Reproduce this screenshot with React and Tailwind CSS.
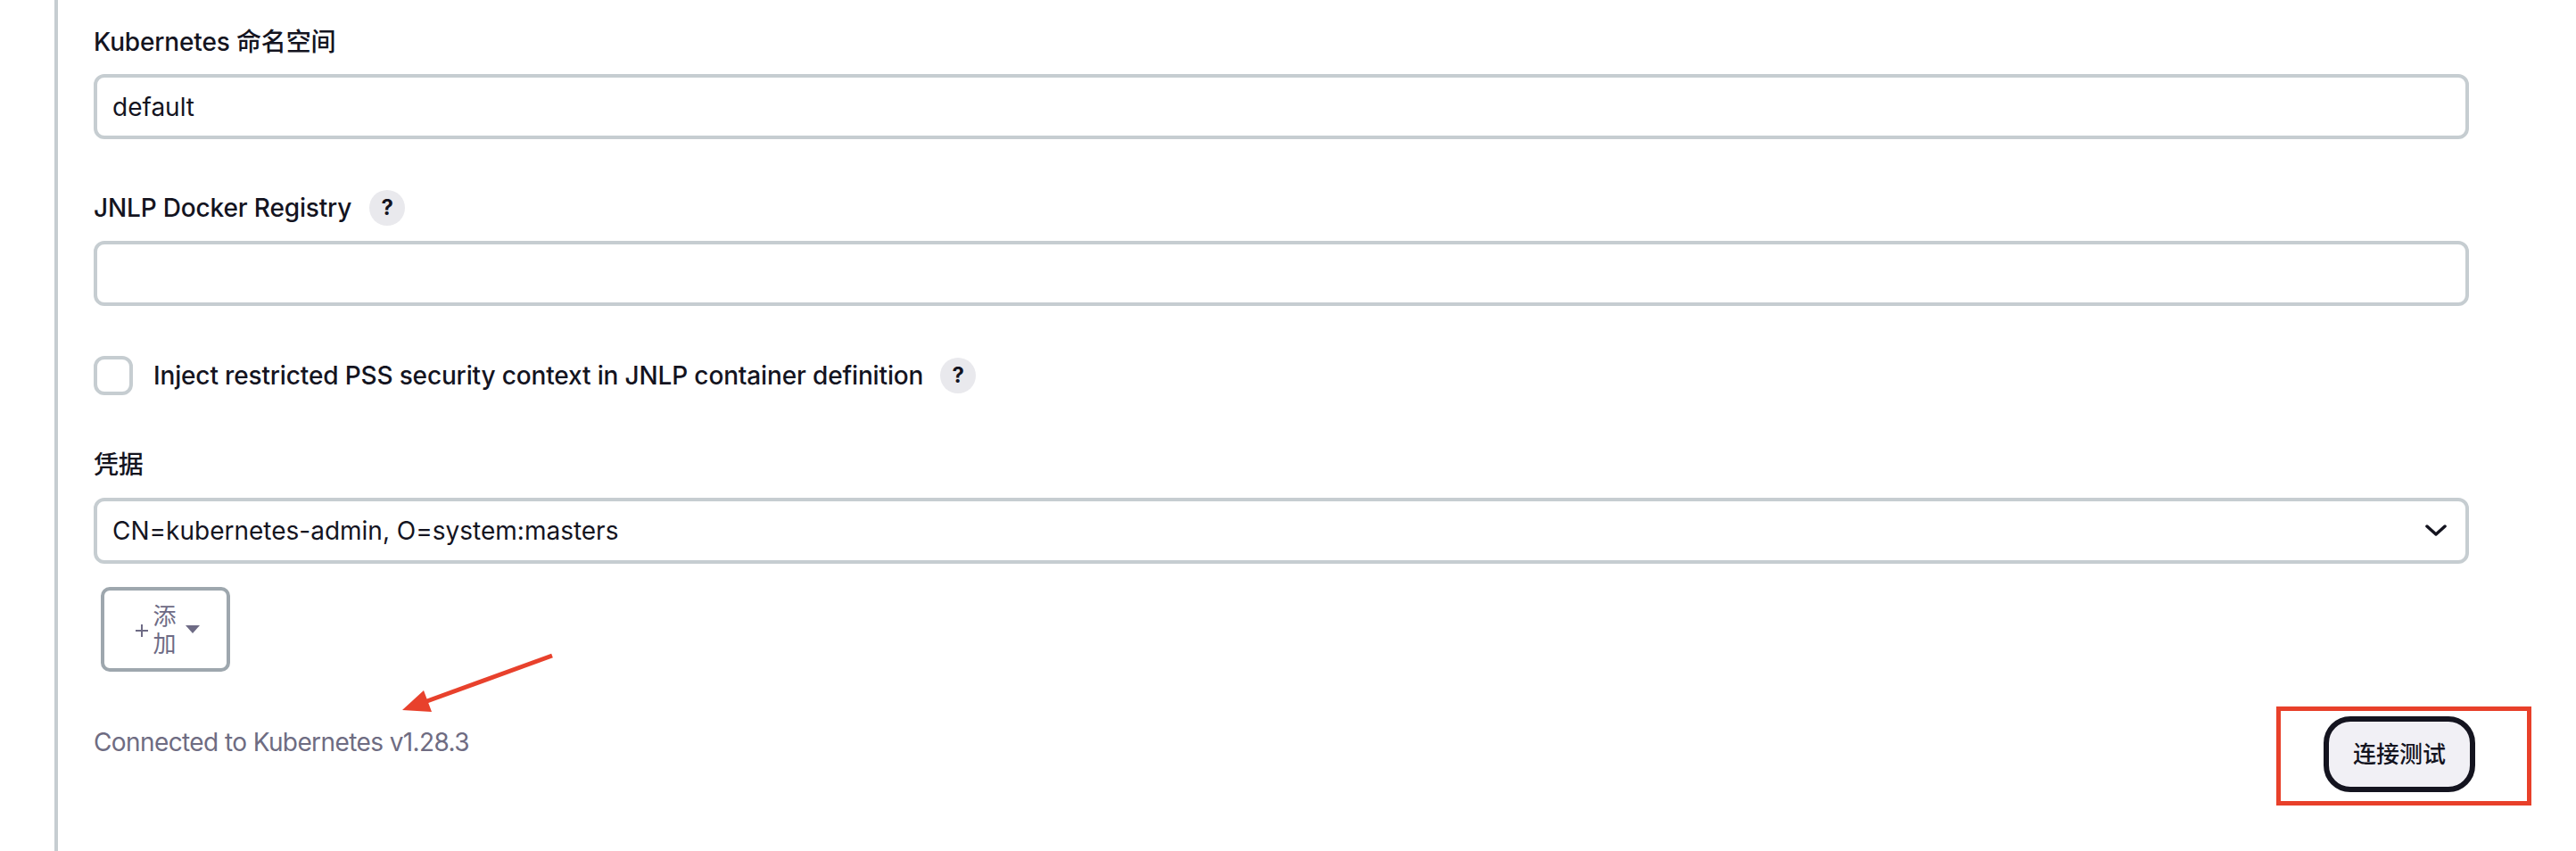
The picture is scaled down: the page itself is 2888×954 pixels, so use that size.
import React from "react";

const FONT = "font-['Inter','Noto_Sans_CJK_SC',sans-serif]";

function HelpBadge({ className = "" }) {
  return (
    <span
      className={`w-[40px] h-[40px] rounded-full bg-[#e9e9ed] flex items-center justify-center text-[24px] font-bold text-[#14141f] leading-none tracking-normal ${className}`}
    >
      ?
    </span>
  );
}

function Label({ children, className = "" }) {
  return (
    <div className={`h-[40px] leading-[40px] text-[28px] font-medium text-[#14141f] tracking-[-0.15px] flex items-center ${className}`}>
      {children}
    </div>
  );
}

function TextInput({ value, className = "" }) {
  return (
    <input
      readOnly
      value={value}
      className={`h-[73px] w-full border-[4px] border-[#c6cdd1] rounded-[12px] px-[17px] text-[28px] text-[#14141f] bg-white outline-none ${className}`}
    />
  );
}

export default function App() {
  return (
    <div className={`relative w-[2888px] h-[954px] bg-white flex overflow-hidden ${FONT}`}>
      <div className="w-[61px] shrink-0" />
      <div className="w-[4px] shrink-0 bg-[#c6cdd1]" />

      <div className="flex-1 pl-[40px] pr-[120px] pt-[27px] flex flex-col">
        <Label>Kubernetes 命名空间</Label>
        <TextInput value="default" className="mt-[16px]" />

        <Label className="mt-[57px]">
          <span>JNLP Docker Registry</span>
          <HelpBadge className="ml-[20px]" />
        </Label>
        <TextInput value="" className="mt-[17px]" />

        <div className="mt-[56px] h-[44px] flex items-center">
          <span className="w-[44px] h-[44px] border-[4px] border-[#c6cdd1] rounded-[12px] bg-white shrink-0" />
          <span className="ml-[23px] text-[28px] leading-[40px] font-medium text-[#14141f] tracking-[-0.15px]">
            Inject restricted PSS security context in JNLP container definition
          </span>
          <HelpBadge className="ml-[19px]" />
        </div>

        <Label className="mt-[58px]">凭据</Label>
        <div className="mt-[17px] h-[74px] border-[4px] border-[#c6cdd1] rounded-[12px] pl-[17px] pr-[21px] flex items-center justify-between text-[28px] text-[#14141f]">
          <span>CN=kubernetes-admin, O=system:masters</span>
          <svg width="24" height="14" viewBox="0 0 24 14" fill="none">
            <path d="M2 2 L12 11 L22 2" stroke="#14141f" strokeWidth="3.5" strokeLinecap="round" strokeLinejoin="round" />
          </svg>
        </div>

        <div className="mt-[26px] ml-[8px] w-[145px] h-[95px] border-[4px] border-[#9ea7ae] rounded-[10px] flex items-center justify-center pl-[4px] text-[#6e6b85]">
          <svg width="16" height="16" viewBox="0 0 16 16" className="mt-[2px]">
            <path d="M8 1 V15 M1 8 H15" stroke="#6e6b85" strokeWidth="2" />
          </svg>
          <div className="ml-[4px] flex flex-col text-[26px] leading-[31px]">
            <span>添</span>
            <span>加</span>
          </div>
          <svg width="16" height="9" viewBox="0 0 16 9" className="ml-[10px]">
            <path d="M0 0 H16 L8 9 Z" fill="#6e6b85" />
          </svg>
        </div>

        <div className="mt-[39px] mr-[-70px] flex items-start justify-between">
          <div className="mt-[20px] h-[40px] leading-[40px] text-[28px] text-[#6e6c82] tracking-[-0.6px]">
            Connected to Kubernetes v1.28.3
          </div>
          <div className="w-[286px] h-[111px] border-[5px] border-[#e8402a] pl-[48px] pt-[6px]">
            <button className="w-[170px] h-[85px] rounded-[30px] border-[6px] border-[#14141f] bg-[#f1f0f5] text-[26px] font-medium text-[#14141f] flex items-center justify-center">
              连接测试
            </button>
          </div>
        </div>
      </div>

      <svg
        className="absolute left-0 top-0 pointer-events-none"
        width="2888"
        height="954"
        viewBox="0 0 2888 954"
      >
        <line x1="619" y1="735" x2="476" y2="787" stroke="#e8412c" strokeWidth="5" />
        <polygon points="451,796 475,774 484,798" fill="#e8412c" />
      </svg>
    </div>
  );
}
